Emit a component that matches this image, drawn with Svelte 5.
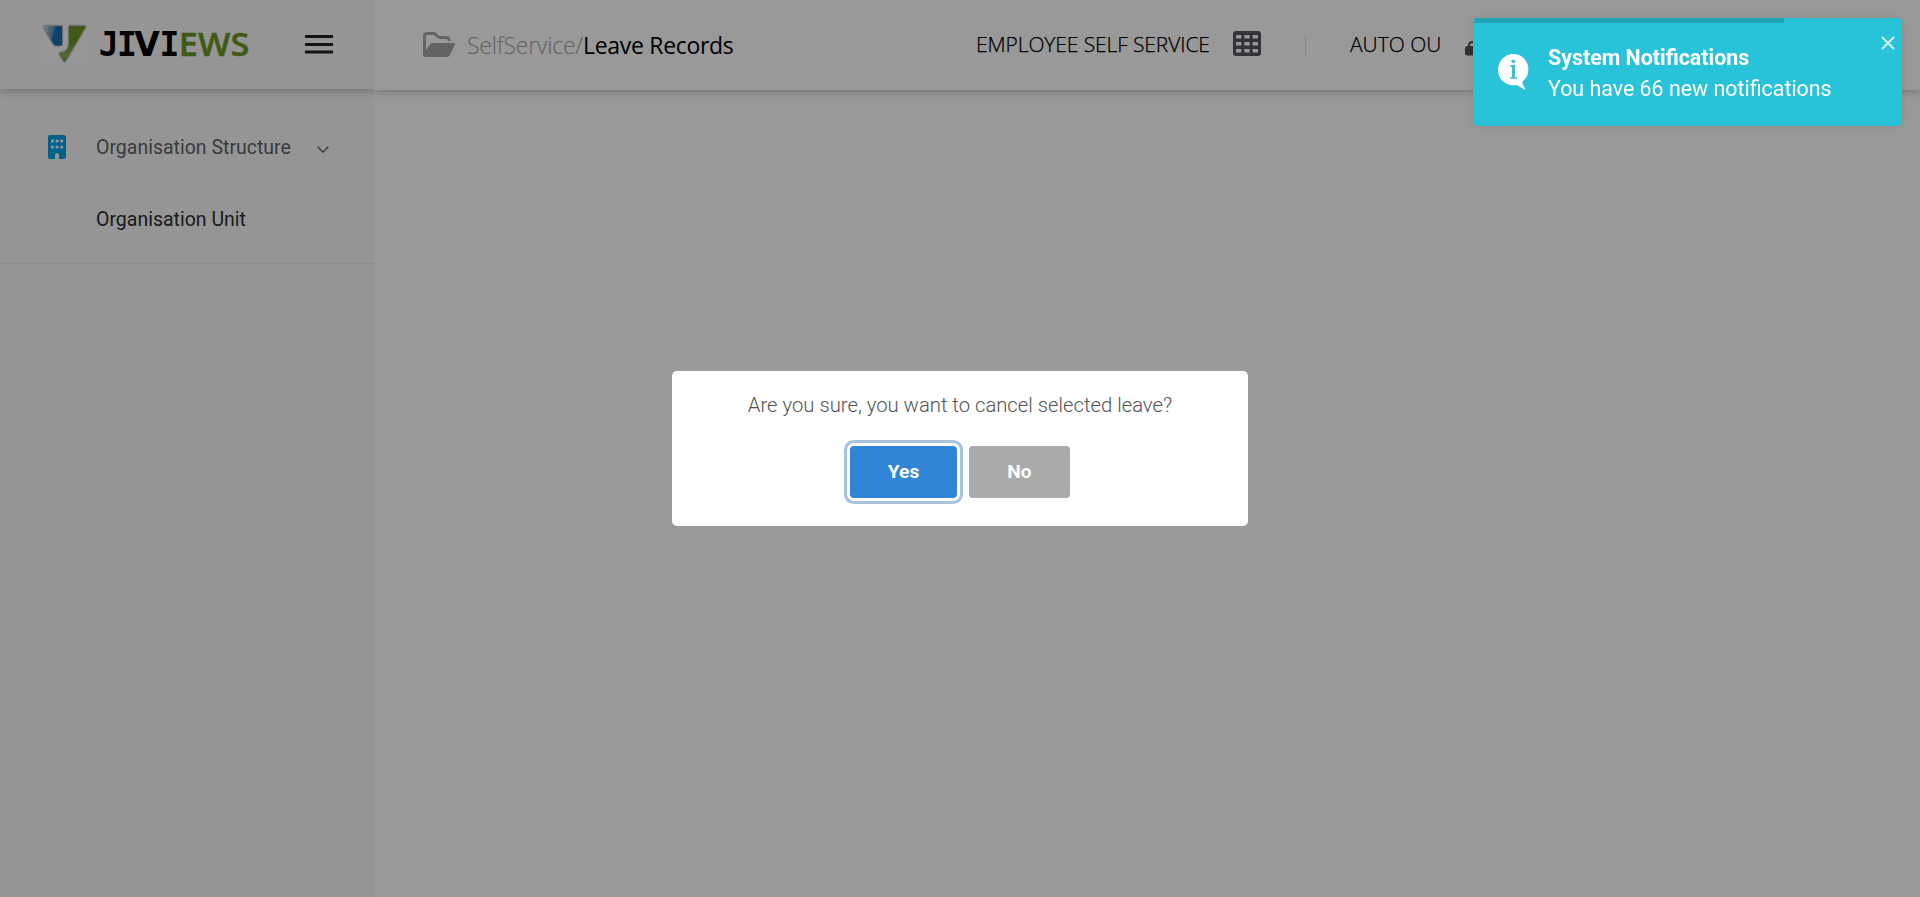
<script>
  const gridCells = [0, 1, 2].flatMap((r) => [0, 1, 2].map((c) => ({ x: 3 + c * 8.3, y: 4 + r * 7 })));
  const windows = [0, 1].flatMap((r) => [0, 1, 2].map((c) => ({ x: 3 + c * 4.6, y: 4.5 + r * 6.2 })));
  const progress = 72.5;
</script>

<div class="app">
  <aside>
    <div class="brand">
      <svg class="logo" width="212" height="46" viewBox="40 20 212 46">
        <defs>
          <linearGradient id="blue" x1="0" y1="0" x2="1" y2="0.3">
            <stop offset="0" stop-color="#d4e0ec" />
            <stop offset="0.6" stop-color="#5b8fb9" />
            <stop offset="0.62" stop-color="#1d71b4" />
            <stop offset="1" stop-color="#1b69aa" />
          </linearGradient>
          <linearGradient id="green" x1="0" y1="0" x2="0" y2="1">
            <stop offset="0.5" stop-color="#6b9624" />
            <stop offset="0.8" stop-color="#84b355" />
            <stop offset="1" stop-color="#63912c" />
          </linearGradient>
        </defs>
        <rect x="41" y="26" width="46" height="37" fill="#fcfcfc" />
        <g class="mark">
          <path d="M43 26H62V44Q62 45.5 60 45.5H56Q54.5 45.5 53.5 44Z" fill="url(#blue)" />
          <path d="M69 26H86L64.5 62.3L59 53Q69 52.500 69 44Z" fill="url(#green)" />
        </g>
        <text class="word" y="55.6"><tspan x="98.800">J</tspan><tspan x="117">I</tspan><tspan class="wide" x="134.300">V</tspan><tspan x="159.400">I</tspan></text>
        <text class="word tail" x="178.800" y="55.600" textLength="70.500" lengthAdjust="spacingAndGlyphs">EWS</text>
      </svg>
      <svg class="burger" width="28" height="19" viewBox="0 0 28 19"><path d="M0 1.500H28M0 9.500H28M0 17H28" stroke="#202124" stroke-width="3" /></svg>
    </div>
    <nav>
      <div class="item">
        <svg class="building" width="18" height="24" viewBox="0 0 18 24">
          <path d="M2 0H16Q18 0 18 2V22Q18 24 16 24H11V20Q11 18 9 18T7 20V24H2Q0 24 0 22V2Q0 0 2 0Z" fill="#03a2e8" />
          {#each windows as w}<rect x={w.x} y={w.y} width="2.900" height="2.900" rx="0.400" fill="#f8f8f8" />{/each}
        </svg>
        <span>Organisation Structure</span>
        <svg class="chevron" width="12" height="8" viewBox="0 0 12 8"><path d="M0.700 0.800L6 6.200L11.300 0.800" fill="none" stroke="#606265" stroke-width="1.400" /></svg>
      </div>
      <div class="item sub">Organisation Unit</div>
    </nav>
  </aside>

  <main>
    <header>
      <svg class="folder" width="32" height="26" viewBox="0 0 32 26">
        <path d="M1.500 22V4Q1.500 1.500 4 1.500H10.500Q11.600 1.500 12.500 2.400L15 4.700Q16 5.500 17 5.500H23.500Q26 5.500 26 8V9" fill="none" stroke="#a6a6aa" stroke-width="3" />
        <path d="M9.500 11H31Q32.500 11 31.800 12.500L27 23Q26 25 24 25H3Q0 25 0 22.500L7 12.500Q8 11 9.500 11Z" fill="#a6a6aa" />
      </svg>
      <div class="crumb"><span class="parent">SelfService/</span><span class="current">Leave Records</span></div>
      <span class="role">EMPLOYEE SELF SERVICE</span>
      <svg class="grid" width="28" height="25" viewBox="0 0 28 25">
        <rect width="28" height="25" rx="3" fill="#56585d" />
        {#each gridCells as c}<rect x={c.x} y={c.y} width="5.400" height="3.400" rx="0.500" fill="#fff" />{/each}
      </svg>
      <i class="divider"></i>
      <span class="unit">AUTO OU</span>
      <svg class="lock" width="18" height="15" viewBox="0 0 18 15">
        <rect x="0" y="5" width="12" height="9.500" rx="2.500" fill="#505257" />
        <path d="M4 6V4Q4 1 7.500 1T11 4" fill="none" stroke="#505257" stroke-width="2" />
      </svg>
    </header>
  </main>
</div>

<div class="overlay">
  <div class="dialog" role="dialog">
    <p>Are you sure, you want to cancel selected leave?</p>
    <div class="actions">
      <button class="yes">Yes</button>
      <button class="no">No</button>
    </div>
  </div>
</div>

<div class="toast">
  <div class="progress" style="width:{progress}%"></div>
  <svg class="info" width="31" height="36" viewBox="0 0 31 36">
    <path d="M15.200 0C23.600 0 30.400 6.600 30.400 15C30.400 21 28 25 24 28L27.500 36L18.500 31C8 33 0 25 0 16C0 7 6.800 0 15.200 0Z" fill="#fff" />
    <path d="M12 11H17V23.200H19V24.800H12V23.200H14V12.600H12Z" fill="#40bfd0" />
    <circle cx="15.300" cy="7.300" r="1.900" fill="#40bfd0" />
  </svg>
  <div class="message">
    <strong>System Notifications</strong>
    <span>You have 66 new notifications</span>
  </div>
  <svg class="close" width="14" height="14" viewBox="0 0 14 14"><path d="M1 1L13 13M13 1L1 13" stroke="#d8f5f9" stroke-width="1.900" /></svg>
</div>

<style>
  :global(body) { margin: 0; overflow: hidden; }
  .app { display: flex; height: 897px; font-family: Roboto, sans-serif; background: #fff; }
  svg { display: block; flex: none; }
  aside { width: 375px; background: #f8f8f8; flex: none; }
  .brand { height: 89px; box-sizing: border-box; display: flex; align-items: flex-start; padding: 20px 0 0 40px; box-shadow: 0 2px 8px rgba(0, 0, 0, 0.24); clip-path: inset(0 0 -14px 0); }
  .mark { filter: drop-shadow(0 0 1px #444); }
  .word { font: 700 33px "DejaVu Sans Mono", monospace; fill: #000; }
  .wide { font-family: "DejaVu Sans", sans-serif; }
  .tail { font-family: "Open Sans", sans-serif; font-weight: 600; fill: #6b9624; stroke: #6b9624; stroke-width: 0.4px; }
  .burger { margin: 15px 0 0 53px; }
  nav { height: 175px; box-sizing: border-box; padding-top: 22px; border-bottom: 1px solid #e9e9e9; }
  .item { height: 72px; display: flex; align-items: center; padding-left: 48px; font-size: 19.5px; color: #606265; white-space: nowrap; }
  .item span { margin: 0 0 0 30px; }
  .chevron { margin: 5px 0 0 26px; }
  .sub { padding-left: 96px; color: #2d2e30; }
  main { flex: 1; }
  header { height: 90px; box-sizing: border-box; display: flex; align-items: flex-start; padding-left: 48px; box-shadow: 0 2px 8px rgba(0, 0, 0, 0.24); clip-path: inset(0 0 -14px 0); font-family: "Open Sans", "Noto Sans", sans-serif; white-space: nowrap; color: #000; }
  .folder { margin-top: 32px; }
  .crumb { margin: 30px 0 0 12px; width: 509px; font-size: 23px; line-height: 31px; }
  .parent { font-weight: 300; color: #a2a2a2; letter-spacing: -0.22px; }
  .current { letter-spacing: -0.3px; }
  .role { margin-top: 30px; width: 257px; font-size: 21px; line-height: 29px; font-weight: 300; letter-spacing: -0.1px; }
  .role, .unit { -webkit-text-stroke: 0.25px #000; }
  .grid { margin-top: 31px; }
  .divider { width: 1px; height: 20px; margin: 36px 44px 0 44px; background: #e0e0e0; }
  .unit { margin-top: 30px; width: 115px; font-size: 21px; line-height: 29px; font-weight: 300; }
  .lock { margin-top: 41px; }
  .overlay { position: fixed; inset: 0; display: flex; align-items: center; justify-content: center; background: rgba(0, 0, 0, 0.4); font-family: Roboto, sans-serif; }
  .dialog { width: 576px; height: 155px; border-radius: 5px; background: #fff; }
  .dialog p { margin: 20px 0 0; text-align: center; font-size: 20.25px; line-height: 28px; font-weight: 300; color: #545454; }
  .actions { display: flex; justify-content: center; gap: 12px; padding-top: 27px; }
  button { height: 52px; padding: 0 0 2px; border: 0; border-radius: 4px; color: #fff; font: 700 19.2px Roboto, sans-serif; }
  .yes { width: 107px; background: #3085d6; box-shadow: 0 0 0 3px #fff, 0 0 0 6px #abc3da; }
  .no { width: 101px; background: #aaa; }
  .toast { position: fixed; top: 18px; right: 18px; width: 429px; height: 108px; box-sizing: border-box; padding: 36px 7px 0 25px; display: flex; align-items: flex-start; border-radius: 5px; overflow: hidden; background: #29c3d9; box-shadow: 0 0 8px rgba(0, 0, 0, 0.1); font: 21.4px/31px Roboto, sans-serif; color: #fff; }
  .progress { position: absolute; left: 0; top: 0; height: 5px; background: #21a4b8; }
  .message { margin: -12px 0 0 19px; display: flex; flex-direction: column; flex: 1; white-space: nowrap; }
  .close { margin-top: -18px; }
</style>
